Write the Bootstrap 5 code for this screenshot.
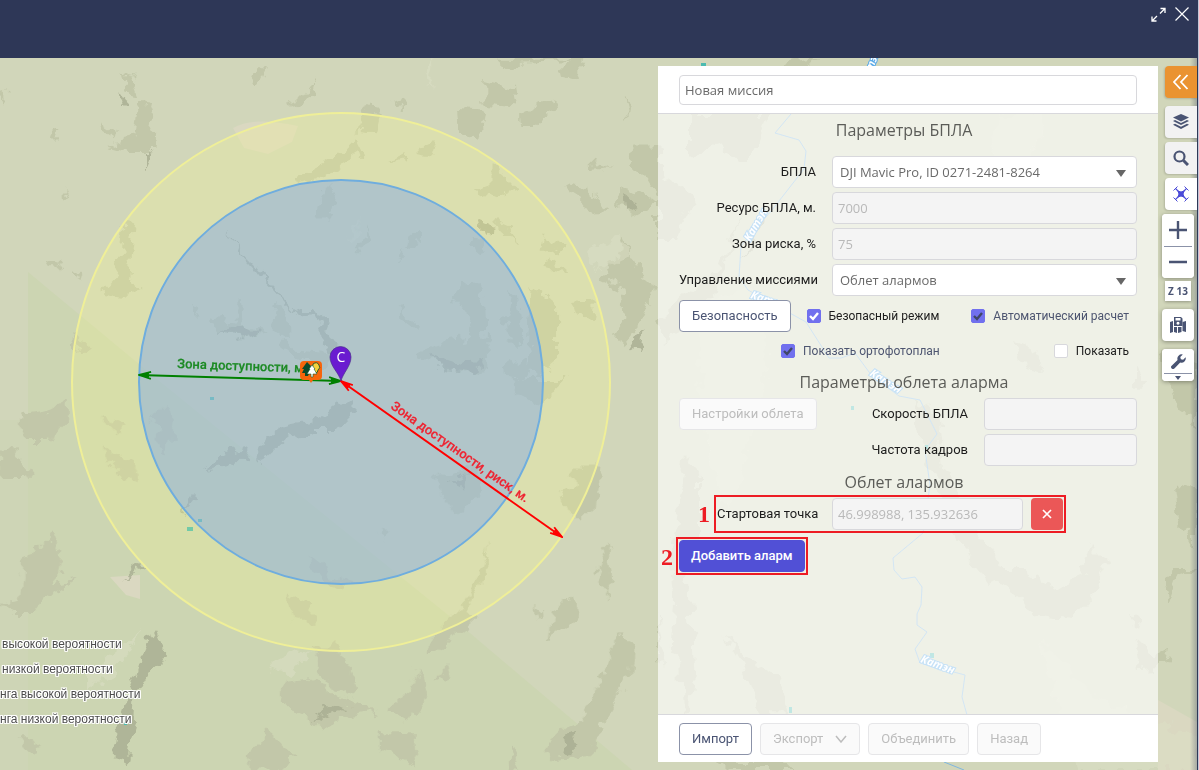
<!DOCTYPE html>
<html lang="ru">
<head>
<meta charset="utf-8">
<meta name="viewport" content="width=device-width, initial-scale=1">
<title>Новая миссия</title>
<link href="https://cdn.jsdelivr.net/npm/bootstrap@5.3.0/dist/css/bootstrap.min.css" rel="stylesheet">
<style>
:root{--navy:#2e3757;--ink:#4a5473;--line:#d8d8dc;--mark:#ed1c24}
body{font-family:Roboto,"Open Sans",sans-serif;font-size:13px;line-height:20px;color:#1c1c1c;background:#d1d6ba}
.app{border-right:1px solid #c3c7d6}
.topbar{background:var(--navy);height:58px;padding:4px 4px 0}
.topbar button{width:24px;height:22px;line-height:0;color:#fff}
.stage{border-right:1px solid var(--navy);padding-top:8px;min-height:0}
.terrain{position:absolute;inset:0;width:100%;height:100%}
.legend{font:12px/25px "Liberation Sans",sans-serif;color:#4c4c4c;padding:0 0 38px;white-space:nowrap;text-shadow:1px 0 #fff,-1px 0 #fff,0 1px #fff,0 -1px #fff,1px 1px #fff,-1px -1px #fff,1px -1px #fff,-1px 1px #fff}
.legend .indent{padding-left:2px}
.mission{width:500px;margin-bottom:8px}
.mission header,.mission footer{background:#fff}
.mission header{padding:9px 21px 8px;border-bottom:1px solid var(--line)}
.mission footer{padding:8px 21px 7px;border-top:1px solid var(--line)}
.mission-body{background:rgba(255,255,255,.65);padding:0 21px}
.mission h2{font-family:"Open Sans",sans-serif;font-size:16px;line-height:32px;font-weight:400;color:#5b5c58;margin:0;text-align:center;padding-right:8px}
.mission h2.first-title{margin-bottom:10px}
.form-control,.form-select{font-family:"Open Sans",sans-serif;font-size:13px;line-height:20px;border-color:var(--line);border-radius:4px;height:32px;color:#6a6a6a;padding:5px}
.form-control:disabled{background:#f4f4f4;color:#b9b9b9}
.mission header .form-control{height:30px;padding:4px 5px}
.form-select{padding:5px 30px 5px 7px;background-image:url("data:image/svg+xml,%3Csvg xmlns='http://www.w3.org/2000/svg' viewBox='0 0 10 7'%3E%3Cpath fill='%23666' d='M0 0h10L5 7z'/%3E%3C/svg%3E");background-size:10px 7px;background-position:right 10px top 13px}
.name-col{width:137px;text-align:right}
.narrow{width:153px}
.btn{font-size:13px;line-height:20px;border-radius:4px;padding:5px 12px;white-space:nowrap}
.btn-line{background:#fff;border-color:#8b92a8;color:var(--ink)}
.btn-line:disabled{background:#fafafa;border-color:#e6e6e8;color:#bdbdbd;opacity:1}
.btn-indigo{background:#5150d6;color:#fff;border-color:#5150d6;font-weight:500;padding:5px 11px;margin-top:10px}
.btn-remove{background:#eb5757;color:#fff;width:32px;height:32px;padding:0;line-height:0;margin-left:auto}
.tick{gap:8px;font-size:12px}
.second-ticks{height:30px;padding-left:102px}
.form-check-input[type=checkbox]{margin:0;width:14px;height:14px;border-radius:2px;border-color:var(--line)}
.form-check-input[type=checkbox]:checked{background-color:#7170ee;border-color:#7170ee;background-size:12px}
.form-check-input.pale-tick[type=checkbox]:checked{background-image:url("data:image/svg+xml,%3Csvg xmlns='http://www.w3.org/2000/svg' viewBox='0 0 12 12'%3E%3Cpath fill='none' stroke='%23fff' stroke-width='2.4' d='M2 6l3 3 5-6'/%3E%3C/svg%3E")}
.form-check-input.dark-tick[type=checkbox]:checked{background-image:url("data:image/svg+xml,%3Csvg xmlns='http://www.w3.org/2000/svg' viewBox='0 0 12 12'%3E%3Cpath fill='none' stroke='%23404768' stroke-width='2.4' d='M2 6l3 3 5-6'/%3E%3C/svg%3E")}
.locked{color:#4d5570}
.start-row{width:346px;margin-left:38px;height:32px;gap:8px}
.start-row label{width:99px;text-align:right;margin-right:8px}
.start-row .form-control{width:191px}
.marked{position:relative}
.marked::after{content:"";position:absolute;inset:-3px;border:2px solid var(--mark);pointer-events:none}
.btn-indigo.marked::after{inset:-4px}
.marked::before{content:attr(data-step);position:absolute;right:100%;top:3px;margin-right:7px;font:bold 24px/26px "Liberation Serif",serif;color:var(--mark)}
.tools{width:39px}
.tools button{border:0;background:#fff;color:var(--ink);display:flex;align-items:center;justify-content:center;padding:0;height:32px;width:32px}
.edge-tool{align-self:flex-end;border-radius:4px 0 0 4px;margin-bottom:4px;box-shadow:-1px 1px 2px rgba(0,0,0,.15)}
.tools .edge-tool{background:#f2f2f2}
.tools .fold{background:#ea9331;color:#fff;margin-bottom:8px}
.tools .drone{background:#fff;color:#4b4bd8}
.float-tool{margin-left:4px;width:32px;background:#fff;border-radius:4px;box-shadow:0 1px 4px rgba(0,0,0,.35);overflow:hidden}
.float-tool hr{margin:0 2px;border:0;border-top:1px solid #8b92a8;opacity:1}
.tools .zoom-out{height:31px}
.zoom-level{margin:3px 0 8px 7px;width:26px;height:20px;background:#fff;font:bold 10px/20px "Open Sans",sans-serif;color:var(--ink);text-align:center;box-shadow:0 1px 3px rgba(0,0,0,.3)}
.tools .more{height:7px}
.tools .wrench{height:24px}
</style>
</head>
<body>
<div class="app d-flex flex-column vh-100">
  <div class="topbar d-flex justify-content-end align-items-start flex-shrink-0">
    <button class="btn p-0 border-0" aria-label="Развернуть"><svg width="16" height="16" viewBox="0 0 16 16" fill="none" stroke="currentColor" stroke-width="1.3"><path d="M10.500 1.500H15V6M15 1.500L10 6.500M2 9.500V14h4.500M2 14l5-5"/></svg></button>
    <button class="btn p-0 border-0" aria-label="Закрыть"><svg width="16" height="16" viewBox="0 0 16 16" fill="none" stroke="currentColor" stroke-width="1.200"><path d="M1.500 .500l13 13M14.500 .500l-13 13"/></svg></button>
  </div>

  <main class="stage position-relative d-flex flex-fill overflow-hidden">
    <svg class="terrain" viewBox="0 58 1197 712" preserveAspectRatio="xMidYMid slice" role="img" aria-label="Карта">
      <defs>
        <filter id="rough" x="-5%" y="-5%" width="110%" height="110%"><feTurbulence type="fractalNoise" baseFrequency=".07" numOctaves="3" seed="4"/><feDisplacementMap in="SourceGraphic" scale="20" xChannelSelector="R" yChannelSelector="G"/></filter>
        <marker id="tipG" viewBox="0 0 14 10" markerWidth="14" markerHeight="10" markerUnits="userSpaceOnUse" refX="13" refY="5" orient="auto-start-reverse"><path d="M1 1.500L13 5 1 8.500M3 3.500L13 5 3 6.500" fill="none" stroke="#008000" stroke-width="1.800"/></marker>
        <marker id="tipR" viewBox="0 0 14 10" markerWidth="14" markerHeight="10" markerUnits="userSpaceOnUse" refX="13" refY="5" orient="auto-start-reverse"><path d="M1 1.500L13 5 1 8.500M3 3.500L13 5 3 6.500" fill="none" stroke="#f00" stroke-width="1.800"/></marker>
        <linearGradient id="fade" x1="0" x2="1"><stop offset="0" stop-color="#2e3757" stop-opacity="0"/><stop offset="1" stop-color="#2e3757" stop-opacity=".3"/></linearGradient>
      </defs>
      <rect y="58" width="1197" height="712" fill="#d1d6ba"/>
      <path d="M28 272L158 380 464 628 632 770H28z" fill="#ccd5b2"/>
      <path d="M0 420H28V770H0z" fill="#ced5b6"/>
      <g fill="#dad8c1"><path d="M233 128q20-12 65-2l-6 16-24 12-24-6zM110 577l30-2v24l-14-4zM1158 700l39 22v48h-39z"/></g>
      <g fill="#c2c7a9" filter="url(#rough)">
        <g transform="translate(0 50) scale(.422 .333)">
          <path d="M295 60l18 30 12 40-22-5zM330 150l14 10 26 90-4 50-60 0-50-18 40-12 25-10 5-60zM235 215l50 40-10 10-35-30zM128 240l15-5-5 40-15 0zM610 60l25-12-18 50-20 5zM750 90l-15 65-45 15-5-20 35-10zM925 140l28 20-5 20zM1085 180l65 5-10 100-50-45zM1150 90l65 20 10 60-75-10zM1130 85l-15 38zM1230 190l80-45 8 30-45 50-40 0zM1170 26l210 0-10 55-45-15 30-30-120 5-30 25zM1480 140l15 20-5 50zM1500 290l64 0 0 150-35-55-40-50zM1330 400l50 10 60 60-20 25-80-65zM1460 410l60 20 40 30-55 35-40-30zM1400 335l50 20-50 5zM870 170l30 30-10 50-45-5zM840 260l18 45-85 70-70 30 10-25 60-40 40-40zM985 290l50-10-10 40-40-8zM920 330l35-20 0 15-30 8zM1160 340l30 30 35 50-60 30-35-25 30-15zM300 510l18 30-10 150 30 25-40 25-55-15 30-35zM770 410l30 0-20 90-30 0zM865 530l10 30-18 50-14 0 15-50zM995 540l0 40-30 15 5-30zM970 600l-30 45 5-25zM1110 560l35 10-10 45-15-15zM1170 510l40 20 15 45-40-20zM1280 560l60 20-10 40-40-30zM1300 620l45 50-55-10zM1480 570l25 70 50 60-40 130-40 60-10-40 20-40-10-90-50-30 20-40zM1260 710l60 60 0 160-60 60-10-90zM1110 690l20 20 20 60 5 190-60 15-100-60 10-20 50-20 60-10-10-70-30-50zM1210 720l20 20 10 120-25 30-20-50zM1240 920l20 30-20 40-40-5-5-25zM1355 760l55-5-5 50-40-5zM950 775l50 50-10 15-40-40zM570 740l5 80 50 25-50 25-60-30-15-35 50 20zM655 760l25 40 5 60-40-30zM665 855l40 45 100 10-30 40-60-10-50-50zM400 735l22 25zM450 765l20 15-5 25zM165 865l45 15-5 20-15 20zM115 630l25 10-10 20zM175 660l25 15-5 20zM145 400l12 35-10 15zM0 120l18 20-10 12z"/>
        </g>
        <g transform="translate(0 380) scale(.422 .333)">
          <path d="M60 100l60-10 45-30 0 40-40 80-60 0-10-40zM0 205l30 5 40 70-10 20-60 0zM125 460l20 60-5 60-20 30 60-10-80 60-20 40-50 0-40-30 60-10 10-130 20-10zM75 1070l-30 0 20 50 25-10zM395 60l15 60-10 110-30-30 10-60-30-10zM250 200l60 50 20 60-45-30-30-40zM250 110l50 30-20 30zM1355 260l70 0-15 140-60 0-20-60 30-20zM1040 290l100-25-10 90-50 50-30-50zM1210 0l140 0-70 80-40-30zM1440 490l10 100-15 60-20-50zM1360 650l10 50-40 50-30 30 10-90zM1270 680l20 20-10 15zM1160 490l-10 100-50 110 30 20-90 100-30 0 40-80 60-80zM730 530l60 60 60 20-50 20-60-50zM680 650l60 20 0 60-40-10zM740 800l60 0 50 140-20 15-60-50zM670 900l60-10 70 60 90 40-90 30-40 35-40-50-60-30zM990 860l20 90-40 70-50-20 20-40 30-20zM1060 850l5 40-30 20zM1460 770l40 20-10 100-50 110-50 130-90 10-10-40 50-60 40-10 50-140zM625 1040l80 90-50 40-60 0-10-50 40-30zM900 1070l80 0 10 90-90-50zM1220 1110l20 60-50 0zM900 440l30 20-20 25z"/>
        </g>
        <g transform="translate(658 570) scale(.345 .333)">
          <path d="M960 0l100 0 90 60 90-60 20-10 20 70-80 90-90-10-110-90zM1370 130l30 40-30-10zM1380 200l60 60 50-30-10 60-80 10zM1460 30l40-30 60 0-60 40-20 60zM50 10l40 30 15 250-10 140-20 0-5-150-30-50zM0 130l20 150-20 0zM190 200l60 60 80 50 55 120-90 0-30-100z"/>
        </g>
        <path d="M690 114l80 0-20 50-12 0-18-20-30 10zM658 170l36 30-20 40-16 0zM745 205l-30 90-50 50-7-25 60-50zM770 66l50-8-25 14-35 8zM685 455l15 20 0 60-25 75-5-60zM915 400l25 20 5 50 30 60 30 45-15 8-30-40-20-50-20-50zM1013 340l20 10 10 22-20-5zM1135 370l15 10-15 12zM1090 545l15 15-12 25-12-10zM1160 350l36 20 0 60-20-30zM1175 480l20 10 0 60-16-30zM720 760l60 0 20 10-70 0z"/>
      </g>
      <g fill="#a8ad91" filter="url(#rough)" opacity=".8">
        <path d="M224 228l18 24 30 34 22 24 22 0 18 30-2 18-18-44-18 2-26-28-28-32zM256 456l10-20 20-10 32-6 32-20 8 8-20 22-24 0-26 8-24 22zM156 630l8 20-12 20-16 30-8 60-14-4 4-30 14-40 10-34zM205 470l40-8 4-14-20 4zM180 520l18-24-4-4zM120 580l28-14-8-2zM220 332l18 8 20-6-10-10zM630 350l14-22-4 24zM310 720l40-14-18-4zM430 355l30 10 25-5-10 14-30-4zM740 260l22-50-4 30zM120 90l8 12-4 4zM145 150l6 8-6 14zM480 220l14 6-10 8zM625 195l14 10-12 6zM655 720l4 8zM560 740l20-10-10 24zM360 400l12 4zM450 480l18-6-4 14zM300 565l18 16zM555 500l8-20z"/>
      </g>
      <g fill="#dcdfc6" opacity=".5" filter="url(#rough)"><path d="M425 70l8-12-4 30zM1000 114l40 0 6 18-16 20-2 32-30-6-8-34zM1040 640l60 60 97 40v30h-120zM700 300l60-10 10 80-40 140-30-80zM90 690l30-20 20-40-50 40zM270 670l20-20 20 4-24 20zM590 250l30-14 10 20-30 14zM345 240l16-24 8-20-20 50z"/></g>
      <g fill="none" stroke="#7fb6e0">
        <path d="M791 114l-16 19 24 7 7 11-2 18-32 41-31 36-2 31 9 13 58 32 23 36 12 0 14-5 17 23 27 20 21 4 17 34-12 16 5 35-7 48-30 25 1 12 8 9 13-2 7 10-1 18-4 9 0 11 10 7-12 17 5 14 45 12-3 22 5 18"/>
        <path d="M944 762l20 8"/>
      </g>
      <g fill="#4bbbb0"><path d="M701 63h5v4h-5zM210 397h4v3h-4zM198 519h4v3h-4zM187 527h6v4h-6zM851 406h3v4h-3zM925 445h3v4h-3zM930 653h4v5h-4zM789 707h3v6h-3zM124 722h3v3h-3z"/></g>
      <g font-family="Open Sans, Noto Sans, sans-serif" font-size="11" font-style="italic" font-weight="bold" fill="#fff" stroke="#5aaae8" stroke-width="2" paint-order="stroke">
        <text x="867" y="84" transform="rotate(-68 867 84)">Катэн</text>
        <text x="750" y="242" transform="rotate(-60 750 242)">Катэн</text>
        <text x="750" y="298" transform="rotate(18 750 298)">Катэн</text>
        <text x="869" y="375" transform="rotate(32 869 375)">Катэн</text>
        <text x="920" y="662" transform="rotate(20 920 662)">Катэн</text>
      </g>
      <circle cx="341" cy="382" r="269" fill="#ffff88" fill-opacity=".22" stroke="#efef98" stroke-width="2"/>
      <circle cx="341" cy="382" r="202" fill="#7ea7e8" fill-opacity=".45" stroke="#6fadde" stroke-width="2"/>
      <path d="M139 375L341 381" stroke="#008000" stroke-width="2" marker-start="url(#tipG)" marker-end="url(#tipG)"/>
      <path d="M341 381L562 537" stroke="#f00" stroke-width="2" marker-start="url(#tipR)" marker-end="url(#tipR)"/>
      <g font-family="Roboto, sans-serif" font-size="13" font-weight="500">
        <text x="177" y="368" transform="rotate(2 177 368)" fill="#1c8a24" stroke="#1c8a24" stroke-width=".2">Зона доступности, м.</text>
        <text x="390" y="408" transform="rotate(35 390 408)" fill="#ee2432" stroke="#ee2432" stroke-width=".2">Зона доступности, риск, м.</text>
      </g>
      <path d="M304 361h14q4 0 4 4v11q0 4-4 4h-5l-2 3-2-3h-5q-4 0-4-4v-11q0-4 4-4z" fill="#f7650c"/>
      <path d="M307 362l-5 7h2l-2 4h3v3h3l4-9z" fill="#0c4b2c"/><path d="M313 364q4-3 6 1 2 3-1 5 0 3-3 3h-3z" fill="#f4d23c" stroke="#315b2a"/>
      <path d="M312 365l-3 4h1l-3 5h4v3h2v-3h4l-3-5h1z" fill="#fff" stroke="#1a5a35" stroke-width=".6"/>
      <path d="M341 381c-2-8-11-15-11-24a10.500 10.500 0 0 1 21 0c0 9-8 16-10 24z" fill="#6a1bd0" stroke="#4a2c8c" stroke-width=".7"/>
      <text x="341" y="362" text-anchor="middle" font-family="Open Sans, sans-serif" font-size="14" fill="#fff">C</text>
      <rect x="1190" y="58" width="7" height="712" fill="url(#fade)"/>
    </svg>

    <div class="legend position-relative align-self-end flex-fill">
      <div class="indent">высокой вероятности</div>
      <div class="indent">низкой вероятности</div>
      <div>нга высокой вероятности</div>
      <div>нга низкой вероятности</div>
    </div>

    <form class="mission position-relative d-flex flex-column flex-shrink-0" onsubmit="return false">
      <header><input class="form-control" type="text" value="Новая миссия" aria-label="Название миссии"></header>
      <div class="mission-body flex-fill">
        <h2 class="first-title">Параметры БПЛА</h2>
        <div class="d-flex flex-column gap-1">
          <div class="d-flex align-items-center gap-3"><label class="name-col" for="uav">БПЛА</label><select class="form-select flex-fill w-auto" id="uav"><option>DJI Mavic Pro, ID 0271-2481-8264</option></select></div>
          <div class="d-flex align-items-center gap-3"><label class="name-col" for="res">Ресурс БПЛА, м.</label><input class="form-control flex-fill w-auto" id="res" value="7000" disabled></div>
          <div class="d-flex align-items-center gap-3"><label class="name-col" for="risk">Зона риска, %</label><input class="form-control flex-fill w-auto" id="risk" value="75" disabled></div>
          <div class="d-flex align-items-center gap-3"><label class="name-col text-nowrap" for="ctl">Управление миссиями</label><select class="form-select flex-fill w-auto" id="ctl"><option>Облет алармов</option></select></div>
          <div class="d-flex align-items-center justify-content-between pe-2">
            <button class="btn btn-line" type="button">Безопасность</button>
            <label class="tick d-flex align-items-center"><input class="form-check-input pale-tick" type="checkbox" checked>Безопасный режим</label>
            <label class="tick locked d-flex align-items-center ms-3"><input class="form-check-input dark-tick" type="checkbox" checked>Автоматический расчет</label>
          </div>
          <div class="second-ticks d-flex align-items-center justify-content-between pe-2">
            <label class="tick locked d-flex align-items-center"><input class="form-check-input dark-tick" type="checkbox" checked>Показать ортофотоплан</label>
            <label class="tick d-flex align-items-center"><input class="form-check-input" type="checkbox">Показать</label>
          </div>
        </div>
        <h2>Параметры облета аларма</h2>
        <div class="d-flex flex-column gap-1">
          <div class="d-flex align-items-center gap-3"><button class="btn btn-line" type="button" disabled>Настройки облета</button><label class="ms-auto" for="spd">Скорость БПЛА</label><input class="form-control narrow" id="spd" disabled></div>
          <div class="d-flex align-items-center gap-3"><label class="ms-auto" for="fps">Частота кадров</label><input class="form-control narrow" id="fps" disabled></div>
        </div>
        <h2>Облет алармов</h2>
        <div class="start-row marked d-flex align-items-center" data-step="1"><label class="text-nowrap" for="start">Стартовая точка</label><input class="form-control" id="start" value="46.998988, 135.932636" disabled><button class="btn btn-remove" type="button" aria-label="Удалить"><svg width="10" height="10" viewBox="0 0 10 10" stroke="#fff" stroke-width="1.700"><path d="M1 1l8 8M9 1L1 9"/></svg></button></div>
        <button class="btn btn-indigo marked" type="button" data-step="2">Добавить аларм</button>
      </div>
      <footer class="d-flex gap-2">
        <button class="btn btn-line" type="button">Импорт</button>
        <button class="btn btn-line d-flex align-items-center gap-2" type="button" disabled>Экспорт <svg class="ms-1" width="12" height="8" viewBox="0 0 12 8" fill="none" stroke="currentColor" stroke-width="1.500"><path d="M1 1l5 6 5-6"/></svg></button>
        <button class="btn btn-line" type="button" disabled>Объединить</button>
        <button class="btn btn-line" type="button" disabled>Назад</button>
      </footer>
    </form>

    <nav class="tools position-relative d-flex flex-column flex-shrink-0" aria-label="Инструменты карты">
      <button class="edge-tool fold" aria-label="Свернуть"><svg width="16" height="16" viewBox="0 0 16 16" fill="none" stroke="currentColor" stroke-width="1.800"><path d="M7.500 1L1 8l6.500 7M14.500 1L8 8l6.500 7"/></svg></button>
      <button class="edge-tool" aria-label="Слои"><svg width="16" height="16" viewBox="0 0 16 16" fill="currentColor"><path d="M8 0l8 3.500L8 7.500 0 3.500z"/><path d="M0 7l2-1 6 3 6-3 2 1-8 4zM0 10.800l2-1 6 3 6-3 2 1L8 15z"/></svg></button>
      <button class="edge-tool" aria-label="Поиск"><svg width="16" height="16" viewBox="0 0 16 16" fill="none" stroke="currentColor"><circle cx="6.500" cy="6.500" r="5" stroke-width="2.200"/><path d="M10.500 10.500L15 15" stroke-width="3"/></svg></button>
      <button class="edge-tool drone" aria-label="БПЛА"><svg width="16" height="16" viewBox="0 0 16 16" fill="none" stroke="currentColor"><path d="M2.500 2.500l11 11M13.500 2.500l-11 11" stroke-width="1.100"/><path d="M5 5l3 1 3-1-1 3 1 3-3-1-3 1 1-3z" fill="currentColor"/><path d="M.5 4.500L4.500 .500M11.500 .500l4 4M.5 11.500l4 4M11.500 15.500l4-4" stroke-width="1"/></svg></button>
      <div class="float-tool">
        <button aria-label="Приблизить"><svg width="18" height="18" viewBox="0 0 18 18" stroke="currentColor" stroke-width="2.400"><path d="M0 9h18M9 0v18"/></svg></button>
        <hr>
        <button class="zoom-out" aria-label="Отдалить"><svg width="18" height="17" viewBox="0 0 18 17" stroke="currentColor" stroke-width="2.400"><path d="M0 8h18"/></svg></button>
      </div>
      <div class="zoom-level">Z 13</div>
      <button class="float-tool mb-2" aria-label="Сохранить карту"><svg width="16" height="16" viewBox="0 0 16 16" fill="currentColor"><path d="M0 5l3-1v11l-3 1zM4 10h3v6l-3-1zM8 10h3.500v5L8 16zM12.500 10V5L16 4v11l-3.500-1z"/><path fill-rule="evenodd" d="M4 0h7l1.500 1.500V9H4zM5.500 1v2.500h5V1zM8 4.800a1.500 1.500 0 1 0 .01 0z"/></svg></button>
      <div class="float-tool">
        <button class="wrench" aria-label="Настройки"><svg width="15" height="15" viewBox="0 0 16 16" fill="currentColor"><path d="M15.600 3.500l-2.700 2.700-2.400-.6-.6-2.400L12.600.5A4.600 4.600 0 0 0 7 6.300L.7 12.500a2 2 0 0 0 2.900 2.900L9.800 9.100a4.600 4.600 0 0 0 5.800-5.600z"/></svg></button>
        <hr>
        <button class="more" aria-label="Ещё"><svg width="6" height="4" viewBox="0 0 6 4" fill="currentColor"><path d="M0 0h6L3 4z"/></svg></button>
      </div>
    </nav>
  </main>
</div>
<script src="https://cdn.jsdelivr.net/npm/bootstrap@5.3.0/dist/js/bootstrap.bundle.min.js"></script>
</body>
</html>
